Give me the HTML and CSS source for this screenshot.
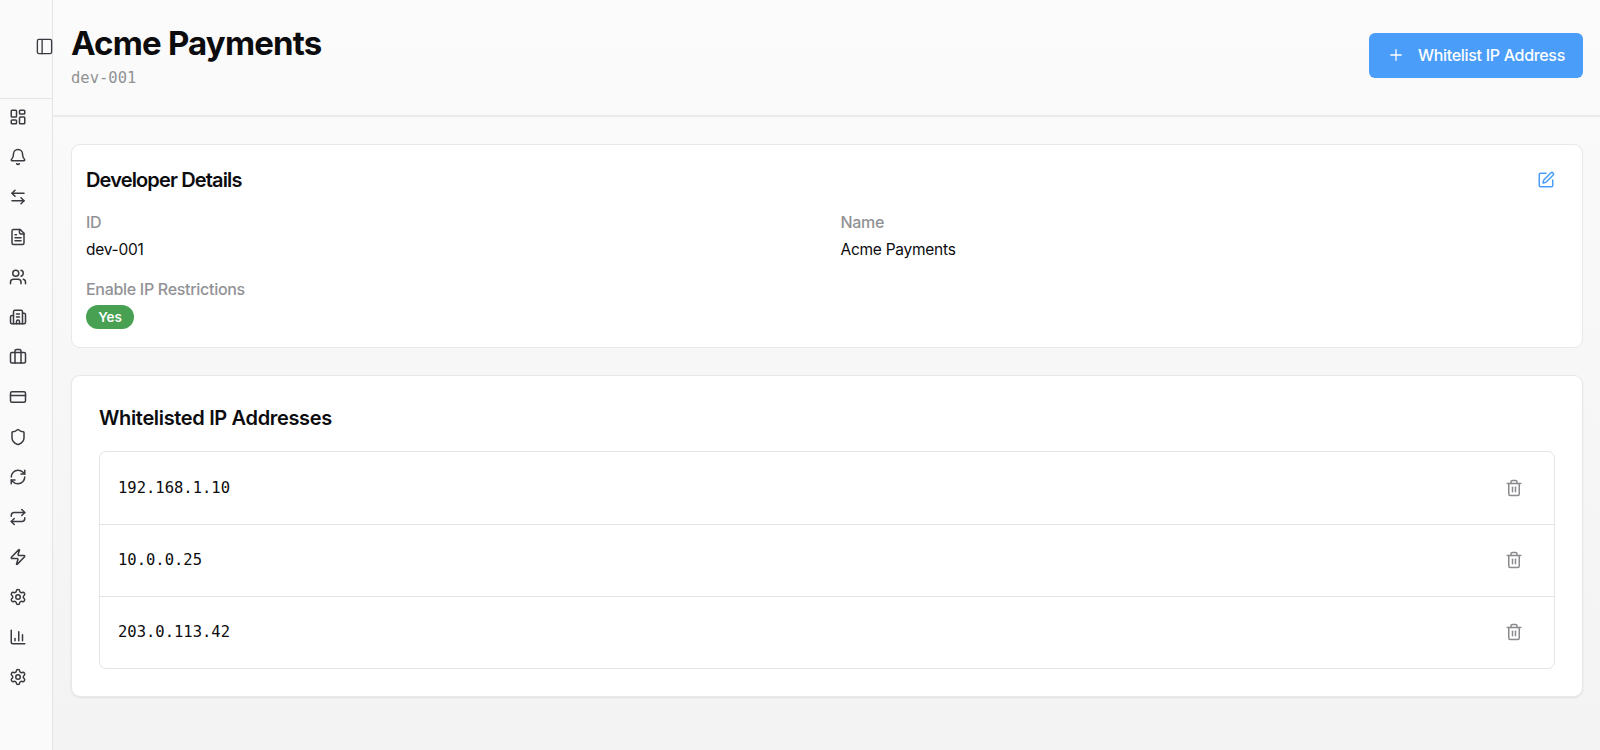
FILE: index.html
```html
<!DOCTYPE html>
<html lang="en">
<head>
    <meta charset="UTF-8">
    <meta name="viewport" content="width=device-width, initial-scale=1.0">
    <title>Acme Payments</title>
    <link rel="stylesheet" href="styles.css">
</head>
<body>

    <aside class="sidebar">
        <div class="sidebar-top">
            <button class="icon-btn" aria-label="Toggle sidebar">
                <svg class="icon panel-icon" viewBox="0 0 24 24"><rect x="3" y="3" width="18" height="18" rx="2"/><path d="M9 3v18"/></svg>
            </button>
        </div>
        <nav class="sidebar-nav">
            <a class="nav-item" aria-label="Dashboard"><svg class="icon" viewBox="0 0 24 24"><rect x="3" y="3" width="7" height="9" rx="1"/><rect x="14" y="3" width="7" height="5" rx="1"/><rect x="14" y="12" width="7" height="9" rx="1"/><rect x="3" y="16" width="7" height="5" rx="1"/></svg></a>
            <a class="nav-item" aria-label="Notifications"><svg class="icon" viewBox="0 0 24 24"><path d="M10.268 21a2 2 0 0 0 3.464 0"/><path d="M3.262 15.326A1 1 0 0 0 4 17h16a1 1 0 0 0 .74-1.673C19.41 13.956 18 12.499 18 8A6 6 0 0 0 6 8c0 4.499-1.411 5.956-2.738 7.326"/></svg></a>
            <a class="nav-item" aria-label="Transactions"><svg class="icon" viewBox="0 0 24 24"><path d="M8 3 4 7l4 4"/><path d="M4 7h16"/><path d="m16 21 4-4-4-4"/><path d="M20 17H4"/></svg></a>
            <a class="nav-item" aria-label="Documents"><svg class="icon" viewBox="0 0 24 24"><path d="M15 2H6a2 2 0 0 0-2 2v16a2 2 0 0 0 2 2h12a2 2 0 0 0 2-2V7Z"/><path d="M14 2v4a2 2 0 0 0 2 2h4"/><path d="M10 9H8"/><path d="M16 13H8"/><path d="M16 17H8"/></svg></a>
            <a class="nav-item" aria-label="Users"><svg class="icon" viewBox="0 0 24 24"><path d="M16 21v-2a4 4 0 0 0-4-4H6a4 4 0 0 0-4 4v2"/><circle cx="9" cy="7" r="4"/><path d="M22 21v-2a4 4 0 0 0-3-3.87"/><path d="M16 3.13a4 4 0 0 1 0 7.75"/></svg></a>
            <a class="nav-item" aria-label="Merchants"><svg class="icon" viewBox="0 0 24 24"><path d="M10 12h4"/><path d="M10 8h4"/><path d="M14 21v-3a2 2 0 0 0-4 0v3"/><path d="M6 10H4a2 2 0 0 0-2 2v7a2 2 0 0 0 2 2h16a2 2 0 0 0 2-2V9a2 2 0 0 0-2-2h-2"/><path d="M6 21V5a2 2 0 0 1 2-2h8a2 2 0 0 1 2 2v16"/></svg></a>
            <a class="nav-item" aria-label="Business"><svg class="icon" viewBox="0 0 24 24"><path d="M16 20V4a2 2 0 0 0-2-2h-4a2 2 0 0 0-2 2v16"/><rect x="2" y="6" width="20" height="14" rx="2"/></svg></a>
            <a class="nav-item" aria-label="Cards"><svg class="icon" viewBox="0 0 24 24"><rect x="2" y="5" width="20" height="14" rx="2"/><path d="M2 10h20"/></svg></a>
            <a class="nav-item" aria-label="Security"><svg class="icon" viewBox="0 0 24 24"><path d="M20 13c0 5-3.5 7.5-7.66 8.95a1 1 0 0 1-.67-.01C7.5 20.5 4 18 4 13V6a1 1 0 0 1 1-1c2 0 4.5-1.2 6.24-2.72a1.17 1.17 0 0 1 1.52 0C14.51 3.81 17 5 19 5a1 1 0 0 1 1 1z"/></svg></a>
            <a class="nav-item" aria-label="Sync"><svg class="icon" viewBox="0 0 24 24"><path d="M3 12a9 9 0 0 1 9-9 9.75 9.75 0 0 1 6.74 2.74L21 8"/><path d="M21 3v5h-5"/><path d="M21 12a9 9 0 0 1-9 9 9.75 9.75 0 0 1-6.74-2.74L3 16"/><path d="M8 16H3v5"/></svg></a>
            <a class="nav-item" aria-label="Recurring"><svg class="icon" viewBox="0 0 24 24"><path d="m17 2 4 4-4 4"/><path d="M3 11v-1a4 4 0 0 1 4-4h14"/><path d="m7 22-4-4 4-4"/><path d="M21 13v1a4 4 0 0 1-4 4H3"/></svg></a>
            <a class="nav-item" aria-label="Events"><svg class="icon" viewBox="0 0 24 24"><path d="M4 14a1 1 0 0 1-.78-1.63l9.9-10.2a.5.5 0 0 1 .86.46l-1.92 6.02A1 1 0 0 0 13 10h7a1 1 0 0 1 .78 1.63l-9.9 10.2a.5.5 0 0 1-.86-.46l1.92-6.02A1 1 0 0 0 11 14z"/></svg></a>
            <a class="nav-item" aria-label="Configuration"><svg class="icon" viewBox="0 0 24 24"><use href="#gear"/></svg></a>
            <a class="nav-item" aria-label="Reports"><svg class="icon" viewBox="0 0 24 24"><path d="M3 3v16a2 2 0 0 0 2 2h16"/><path d="M18 17V9"/><path d="M13 17V5"/><path d="M8 17v-3"/></svg></a>
            <a class="nav-item" aria-label="Settings"><svg class="icon" viewBox="0 0 24 24"><use href="#gear"/></svg></a>
        </nav>
    </aside>

    <main class="main">
        <header class="page-header">
            <div>
                <h1>Acme Payments</h1>
                <p class="dev-id">dev-001</p>
            </div>
            <button class="add-btn">
                <svg class="icon plus-icon" viewBox="0 0 24 24"><path d="M5 12h14"/><path d="M12 5v14"/></svg>
                <span>Whitelist IP Address</span>
            </button>
        </header>

        <div class="content">
            <section class="card details">
                <div class="details-head">
                    <h2>Developer Details</h2>
                    <button class="icon-btn edit-btn" aria-label="Edit">
                        <svg class="icon" viewBox="0 0 24 24"><path d="M12 3H5a2 2 0 0 0-2 2v14a2 2 0 0 0 2 2h14a2 2 0 0 0 2-2v-7"/><path d="M18.375 2.625a1 1 0 0 1 3 3l-9.013 9.014a2 2 0 0 1-.853.505l-2.873.84a.5.5 0 0 1-.62-.62l.84-2.873a2 2 0 0 1 .506-.852z"/></svg>
                    </button>
                </div>
                <div class="details-grid">
                    <div>
                        <div class="label">ID</div>
                        <div class="value">dev-001</div>
                    </div>
                    <div>
                        <div class="label">Name</div>
                        <div class="value">Acme Payments</div>
                    </div>
                    <div>
                        <div class="label">Enable IP Restrictions</div>
                        <span class="badge">Yes</span>
                    </div>
                </div>
            </section>

            <section class="card whitelist">
                <h2>Whitelisted IP Addresses</h2>
                <ul class="ip-list">
                    <li>
                        <span>192.168.1.10</span>
                        <button class="icon-btn trash-btn" aria-label="Delete"><svg class="icon" viewBox="0 0 24 24"><use href="#trash"/></svg></button>
                    </li>
                    <li>
                        <span>10.0.0.25</span>
                        <button class="icon-btn trash-btn" aria-label="Delete"><svg class="icon" viewBox="0 0 24 24"><use href="#trash"/></svg></button>
                    </li>
                    <li>
                        <span>203.0.113.42</span>
                        <button class="icon-btn trash-btn" aria-label="Delete"><svg class="icon" viewBox="0 0 24 24"><use href="#trash"/></svg></button>
                    </li>
                </ul>
            </section>
        </div>
    </main>

    <!-- shared icons -->
    <svg class="sprite">
        <symbol id="gear" viewBox="0 0 24 24"><path d="M9.671 4.136a2.34 2.34 0 0 1 4.659 0 2.34 2.34 0 0 0 3.319 1.915 2.34 2.34 0 0 1 2.33 4.033 2.34 2.34 0 0 0 0 3.831 2.34 2.34 0 0 1-2.33 4.033 2.34 2.34 0 0 0-3.319 1.915 2.34 2.34 0 0 1-4.659 0 2.34 2.34 0 0 0-3.32-1.915 2.34 2.34 0 0 1-2.33-4.033 2.34 2.34 0 0 0 0-3.831A2.34 2.34 0 0 1 6.35 6.051a2.34 2.34 0 0 0 3.319-1.915"/><circle cx="12" cy="12" r="3"/></symbol>
        <symbol id="trash" viewBox="0 0 24 24"><path d="M3 6h18"/><path d="M19 6v14c0 1-1 2-2 2H7c-1 0-2-1-2-2V6"/><path d="M8 6V4c0-1 1-2 2-2h4c1 0 2 1 2 2v2"/><path d="M10 11v6"/><path d="M14 11v6"/></symbol>
    </svg>

</body>
</html>
```

FILE: styles.css
```css
* {
    box-sizing: border-box;
}

html, body {
    height: 100%;
    margin: 0;
}

body {
    display: flex;
    overflow: hidden;
    font-family: 'Inter', 'Liberation Sans', sans-serif;
    font-size: 16px;
    color: #0c0c0f;
    background-color: #fafafa;
}

h1, h2, p, ul {
    margin: 0;
    padding: 0;
}

button {
    font-family: inherit;
    cursor: pointer;
}

.icon {
    display: block;
    width: 18px;
    height: 18px;
    fill: none;
    stroke: currentColor;
    stroke-width: 2;
    stroke-linecap: round;
    stroke-linejoin: round;
}

.icon-btn {
    padding: 0;
    border: none;
    background: none;
    color: inherit;
}

.sprite {
    display: none;
}

.sidebar {
    flex: 0 0 53px;
    color: #3a3a40;
    background-color: #fafafa;
    border-right: 1px solid #e4e4e7;
}

.sidebar-top {
    display: flex;
    align-items: center;
    justify-content: flex-end;
    height: 99px;
    padding-bottom: 5px;
    border-bottom: 1px solid #e5e5e7;
}

.panel-icon {
    width: 19px;
    height: 19px;
    margin-right: -2px;
    stroke-width: 1.7;
}

.sidebar-nav {
    padding: 8.6px 0 0 8.5px;
}

.nav-item {
    display: block;
    height: 18px;
    margin-bottom: 22.03px;
}

.main {
    flex: 1;
    min-width: 0;
    background: linear-gradient(#fbfbfb, #f3f3f3);
}

.page-header {
    display: flex;
    justify-content: space-between;
    height: 117px;
    padding: 23px 17px 0 18px;
    border-bottom: 2px solid #ebebec;
}

h1 {
    font-size: 33px;
    line-height: 40px;
    font-weight: 700;
    letter-spacing: -0.8px;
}

.dev-id {
    margin-top: 3px;
    font-family: 'DejaVu Sans Mono', monospace;
    font-size: 15.5px;
    line-height: 24px;
    color: #929295;
}

.add-btn {
    display: flex;
    align-items: center;
    width: 214px;
    height: 45px;
    margin-top: 10px;
    padding: 0 0 1px 18px;
    border: none;
    border-radius: 6px;
    color: #fff;
    background-color: #4a9df8;
    font-size: 16px;
    font-weight: 500;
    letter-spacing: -0.31px;
    white-space: nowrap;
}

.plus-icon {
    margin-right: 13px;
    stroke-width: 1.7;
}

.content {
    padding: 27px 17px 0 18px;
}

.card {
    background-color: #fff;
    border: 1px solid #e8e8ea;
    border-radius: 9px;
}

h2 {
    font-size: 20px;
    line-height: 28px;
    font-weight: 600;
    letter-spacing: -0.34px;
}

.details {
    height: 204px;
    padding: 21px 27px 0 14px;
}

.details-head {
    display: flex;
    align-items: center;
    justify-content: space-between;
    height: 28px;
}

.details-head h2 {
    letter-spacing: -0.86px;
}

.edit-btn {
    color: #4a9df8;
}

.details-grid {
    display: grid;
    grid-template-columns: 1fr 1fr;
    margin-right: -13px;
    padding-top: 15px;
    gap: 13px 27px;
}

.label {
    line-height: 27px;
    font-weight: 500;
    letter-spacing: -0.3px;
    color: #929296;
}

.value {
    font-size: 15.5px;
    line-height: 27px;
    letter-spacing: -0.26px;
}

.badge {
    display: block;
    width: 48px;
    height: 24px;
    margin-top: 2px;
    border-radius: 12px;
    color: #fff;
    background-color: #48a052;
    font-size: 13.5px;
    line-height: 24px;
    font-weight: 600;
    text-align: center;
}

.whitelist {
    height: 322px;
    margin-top: 27px;
    padding: 28px 27px 0;
    box-shadow: 0 1px 2px rgba(0, 0, 0, 0.08);
}

.ip-list {
    height: 218px;
    margin-top: 19px;
    display: grid;
    grid-template-rows: repeat(3, 1fr);
    list-style: none;
    border: 1px solid #e4e4e6;
    border-radius: 7px;
    font-family: 'DejaVu Sans Mono', monospace;
    font-size: 15.5px;
}

.ip-list li {
    display: flex;
    align-items: center;
    justify-content: space-between;
    padding: 0 31px 1px 18px;
}

.ip-list li + li {
    border-top: 1px solid #e4e4e6;
}

.trash-btn {
    color: #8a8a8e;
}
```
